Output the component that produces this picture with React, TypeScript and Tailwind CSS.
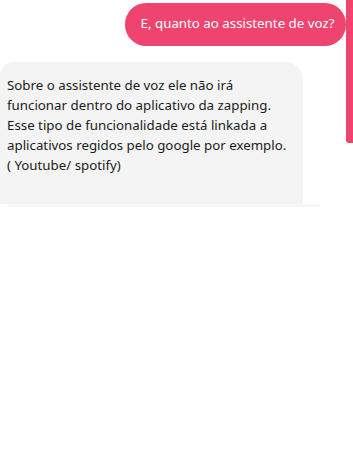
export default function App() {
  return (
    <div
      className="relative w-[353px] h-[473px] bg-white overflow-hidden"
      style={{ fontFamily: '"Noto Sans", "Open Sans", sans-serif' }}
    >
      <div className="absolute right-0 top-0 w-[7px] h-[143px] bg-[#f04470] rounded-bl-[3px]" />
      <div className="flex justify-end pt-[3px] pr-[7px]">
        <div className="w-[221px] h-[43px] rounded-[21px] bg-[#f04470] text-white text-[13.3px] flex items-center justify-center pl-[4px] pb-[1px]">
          E, quanto ao assistente de voz?
        </div>
      </div>
      <div className="mt-[16px] w-[303px] h-[142px] bg-[#f4f4f4] rounded-tl-[14px] rounded-tr-[18px] pl-[7px] pt-[13px] text-[13.3px] leading-[20px] text-[#1b1b1b]">
        Sobre o assistente de voz ele não irá
        <br />
        funcionar dentro do aplicativo da zapping.
        <br />
        Esse tipo de funcionalidade está linkada a
        <br />
        aplicativos regidos pelo google por exemplo.
        <br />( Youtube/ spotify)
      </div>
      <div className="ml-[8px] w-[312px] h-[3px] bg-[#f7f7f7]" />
    </div>
  );
}
